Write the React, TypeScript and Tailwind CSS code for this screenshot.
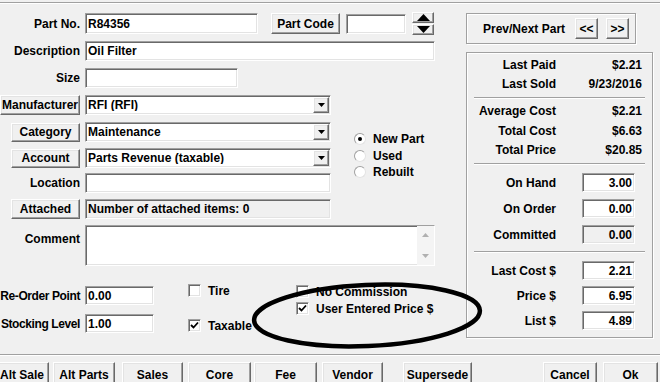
import React from "react";

const sunken =
  "border border-t-[#a0a0a0] border-l-[#a0a0a0] border-r-white border-b-white shadow-[inset_1px_1px_0_#696969,inset_-1px_-1px_0_#e3e3e3]";
const raised =
  "border border-t-white border-l-white border-r-[#696969] border-b-[#696969] shadow-[inset_-1px_-1px_0_#a0a0a0,inset_1px_1px_0_#e3e3e3] bg-[#f0f0f0]";
const etched =
  "border border-[#a0a0a0] shadow-[inset_1px_1px_0_#ffffff,1px_1px_0_#ffffff]";

function Btn({ className = "", children }: { className?: string; children?: React.ReactNode }) {
  return (
    <div className={`${raised} flex items-center justify-center whitespace-nowrap shrink-0 ${className}`}>
      {children}
    </div>
  );
}

function Field({ className = "", children }: { className?: string; children?: React.ReactNode }) {
  return (
    <div className={`${sunken} flex items-center px-[2px] whitespace-nowrap overflow-hidden shrink-0 ${className}`}>
      {children}
    </div>
  );
}

function Label({ children, className = "" }: { children?: React.ReactNode; className?: string }) {
  return <div className={`w-[80px] shrink-0 flex justify-end whitespace-nowrap ${className}`}>{children}</div>;
}

function Combo({ children }: { children?: React.ReactNode }) {
  return (
    <div className={`${sunken} bg-white ml-[5px] w-[246px] h-[20px] flex items-center shrink-0`}>
      <div className="flex-1 pl-[2px] whitespace-nowrap overflow-hidden">{children}</div>
      <div className={`${raised} w-[16px] h-[16px] mr-[1px] flex items-center justify-center`}>
        <svg width="7" height="4" viewBox="0 0 7 4">
          <polygon points="0,0 7,0 3.5,4" fill="#000" />
        </svg>
      </div>
    </div>
  );
}

function Check({ checked, label, className = "" }: { checked?: boolean; label: string; className?: string }) {
  return (
    <div className={`flex items-center whitespace-nowrap ${className}`}>
      <div className={`${sunken} bg-white w-[13px] h-[13px] flex items-center justify-center shrink-0`}>
        {checked && (
          <svg width="9" height="9" viewBox="0 0 9 9">
            <polyline points="1,4 3.5,6.5 8,1.5" fill="none" stroke="#000" strokeWidth="1.8" />
          </svg>
        )}
      </div>
      <span className="ml-[7px]">{label}</span>
    </div>
  );
}

function Radio({ checked, label, className = "" }: { checked?: boolean; label: string; className?: string }) {
  return (
    <div className={`flex items-center whitespace-nowrap ${className}`}>
      <div className="w-[12px] h-[12px] rounded-full bg-white border border-t-[#a0a0a0] border-l-[#a0a0a0] border-r-[#e3e3e3] border-b-[#e3e3e3] flex items-center justify-center shrink-0">
        {checked && <div className="w-[4px] h-[4px] rounded-full bg-black" />}
      </div>
      <span className="ml-[7px]">{label}</span>
    </div>
  );
}

function StatRow({ label, value, className = "" }: { label: string; value: string; className?: string }) {
  return (
    <div className={`flex items-center ${className}`}>
      <div className="w-[89px] shrink-0 flex justify-end whitespace-nowrap">{label}</div>
      <div className="flex-1 text-right pr-[10px] whitespace-nowrap">{value}</div>
    </div>
  );
}

function InputRow({ label, value, gray, className = "" }: { label: string; value: string; gray?: boolean; className?: string }) {
  return (
    <div className={`flex items-center h-[19px] ${className}`}>
      <div className="w-[89px] shrink-0 flex justify-end whitespace-nowrap">{label}</div>
      <Field className={`ml-[26px] w-[53px] h-[19px] justify-end ${gray ? "bg-[#f0f0f0]" : "bg-white"}`}>{value}</Field>
    </div>
  );
}

function Sep({ className = "" }: { className?: string }) {
  return <div className={`mx-[7px] h-[2px] border-t border-t-[#a0a0a0] border-b border-b-white ${className}`} />;
}

export default function App() {
  return (
    <div className="w-[660px] h-[382px] bg-[#f0f0f0] overflow-hidden relative text-black font-['Liberation_Sans',Arial,sans-serif] text-[12px] font-bold leading-none">
      {/* top groove */}
      <div className="mt-[2px] h-[2px] border-t border-t-[#a0a0a0] border-b border-b-white" />

      <div className="flex h-[350px]">
        {/* LEFT COLUMN */}
        <div className="w-[440px] shrink-0 flex flex-col">
          <div className="mt-[9px] flex items-center h-[21px]">
            <Label>Part No.</Label>
            <Field className="ml-[5px] w-[173px] h-[21px] bg-white">R84356</Field>
            <Btn className="ml-[13px] w-[69px] h-[21px]">Part Code</Btn>
            <Field className="ml-[6px] w-[60px] h-[20px] bg-white" />
            <div className="ml-[6px] w-[22px] h-[23px] flex flex-col gap-[1px] shrink-0">
              <div className={`${raised} h-[11px] flex items-center justify-center`}>
                <svg width="13" height="7" viewBox="0 0 13 7">
                  <polygon points="6.5,0 13,7 0,7" fill="#000" />
                </svg>
              </div>
              <div className={`${raised} h-[11px] flex items-center justify-center`}>
                <svg width="13" height="7" viewBox="0 0 13 7">
                  <polygon points="0,0 13,0 6.5,7" fill="#000" />
                </svg>
              </div>
            </div>
          </div>

          <div className="mt-[7px] flex items-center h-[20px]">
            <Label>Description</Label>
            <Field className="ml-[5px] w-[350px] h-[20px] bg-white">Oil Filter</Field>
          </div>

          <div className="mt-[7px] flex items-center h-[20px]">
            <Label>Size</Label>
            <Field className="ml-[5px] w-[153px] h-[20px] bg-white" />
          </div>

          <div className="mt-[7px] flex items-center h-[20px]">
            <Label>
              <Btn className="w-[80px] h-[20px]">Manufacturer</Btn>
            </Label>
            <Combo>RFI (RFI)</Combo>
          </div>

          <div className="mt-[7px] flex">
            <div className="w-[331px] shrink-0 flex flex-col">
              <div className="flex items-center h-[20px]">
                <Label>
                  <Btn className="w-[69px] h-[19px]">Category</Btn>
                </Label>
                <Combo>Maintenance</Combo>
              </div>
              <div className="mt-[6px] flex items-center h-[20px]">
                <Label>
                  <Btn className="w-[69px] h-[19px]">Account</Btn>
                </Label>
                <Combo>Parts Revenue (taxable)</Combo>
              </div>
              <div className="mt-[5px] flex items-center h-[20px]">
                <Label>Location</Label>
                <Field className="ml-[5px] w-[246px] h-[20px] bg-white" />
              </div>
            </div>
            <div className="ml-[23px] mt-[9px] flex flex-col">
              <Radio checked label="New Part" className="h-[16px]" />
              <Radio label="Used" className="h-[17px]" />
              <Radio label="Rebuilt" className="h-[16px]" />
            </div>
          </div>

          <div className="mt-[6px] flex items-center h-[20px]">
            <Label>
              <Btn className="w-[69px] h-[20px]">Attached</Btn>
            </Label>
            <Field className="ml-[5px] w-[246px] h-[20px] bg-[#f0f0f0]">Number of attached items: 0</Field>
          </div>

          <div className="mt-[6px] flex items-start h-[41px]">
            <Label className="pt-[8px]">Comment</Label>
            <div className={`${sunken} ml-[5px] w-[350px] h-[41px] bg-white flex shrink-0`}>
              <div className="flex-1" />
              <div className="w-[17px] bg-[#f4f4f4] flex flex-col items-center justify-between py-[7px]">
                <svg width="7" height="4" viewBox="0 0 7 4">
                  <polygon points="3.5,0 7,4 0,4" fill="#b0b0b0" />
                </svg>
                <svg width="7" height="4" viewBox="0 0 7 4">
                  <polygon points="0,0 7,0 3.5,4" fill="#b0b0b0" />
                </svg>
              </div>
            </div>
          </div>

          {/* bottom-left section */}
          <div className="flex">
            <div className="w-[154px] shrink-0 flex flex-col">
              <div className="mt-[20px] flex items-center h-[19px]">
                <Label className="tracking-[-0.4px]">Re-Order Point</Label>
                <Field className="ml-[5px] w-[69px] h-[19px] bg-white">0.00</Field>
              </div>
              <div className="mt-[9px] flex items-center h-[19px]">
                <Label className="tracking-[-0.4px]">Stocking Level</Label>
                <Field className="ml-[5px] w-[69px] h-[19px] bg-white">1.00</Field>
              </div>
            </div>
            <div className="ml-[34px] w-[108px] shrink-0 flex flex-col">
              <Check label="Tire" className="mt-[18px] h-[13px]" />
              <Check checked label="Taxable" className="mt-[22px] h-[13px]" />
            </div>
            <div className="flex flex-col">
              <Check label="No Commission" className="mt-[19px] h-[13px]" />
              <Check checked label="User Entered Price $" className="mt-[4px] h-[13px]" />
            </div>
          </div>
        </div>

        {/* RIGHT COLUMN */}
        <div className="pl-[26px] flex flex-col">
          <div className={`${etched} mt-[9px] w-[170px] h-[31px] flex items-center pl-[16px]`}>
            <span className="w-[92px] whitespace-nowrap">Prev/Next Part</span>
            <Btn className="w-[23px] h-[21px]">&lt;&lt;</Btn>
            <Btn className="ml-[8px] w-[23px] h-[21px]">&gt;&gt;</Btn>
          </div>

          <div className={`${etched} mt-[8px] w-[187px] h-[286px] flex flex-col`}>
            <StatRow label="Last Paid" value="$2.21" className="mt-[2px] h-[19px]" />
            <StatRow label="Last Sold" value="9/23/2016" className="h-[19px]" />
            <Sep className="mt-[4px]" />
            <StatRow label="Average Cost" value="$2.21" className="mt-[1px] h-[21px]" />
            <StatRow label="Total Cost" value="$6.63" className="h-[19px]" />
            <StatRow label="Total Price" value="$20.85" className="h-[19px]" />
            <Sep className="mt-[4px]" />
            <InputRow label="On Hand" value="3.00" className="mt-[8px]" />
            <InputRow label="On Order" value="0.00" className="mt-[7px]" />
            <InputRow label="Committed" value="0.00" gray className="mt-[7px]" />
            <Sep className="mt-[7px]" />
            <InputRow label="Last Cost $" value="2.21" className="mt-[8px]" />
            <InputRow label="Price $" value="6.95" className="mt-[6px]" />
            <InputRow label="List $" value="4.89" className="mt-[6px]" />
          </div>
        </div>
      </div>

      {/* bottom groove */}
      <div className="h-[2px] border-t border-t-[#a0a0a0] border-b border-b-white" />

      <div className="mt-[6px] flex ml-[-5px]">
        <Btn className="w-[54px] h-[26px]">Alt Sale</Btn>
        <Btn className="ml-[4px] w-[62px] h-[26px]">Alt Parts</Btn>
        <Btn className="ml-[7px] w-[61px] h-[26px]">Sales</Btn>
        <Btn className="ml-[5px] w-[63px] h-[26px]">Core</Btn>
        <Btn className="ml-[3px] w-[63px] h-[26px]">Fee</Btn>
        <Btn className="ml-[5px] w-[61px] h-[26px]">Vendor</Btn>
        <Btn className="ml-[20px] w-[69px] h-[26px]">Supersede</Btn>
        <Btn className="ml-[71px] w-[54px] h-[26px]">Cancel</Btn>
        <Btn className="ml-[6px] w-[55px] h-[26px]">Ok</Btn>
      </div>

      {/* hand-drawn ellipse annotation */}
      <svg className="absolute left-[240px] top-[270px] pointer-events-none" width="260" height="90" viewBox="0 0 260 90">
        <ellipse cx="127" cy="45.5" rx="113" ry="30.5" transform="rotate(-2.5 127 45.5)" fill="none" stroke="#000" strokeWidth="4.5" />
      </svg>
    </div>
  );
}
